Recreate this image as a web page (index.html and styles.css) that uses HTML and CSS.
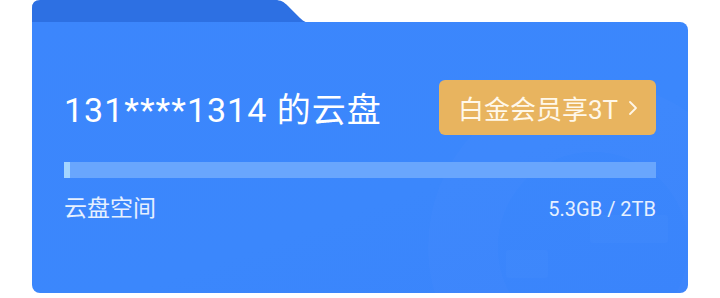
FILE: index.html
```html
<!DOCTYPE html>
<html lang="zh-CN">
<head>
<meta charset="utf-8">
<link rel="stylesheet" href="styles.css">
</head>
<body>
<div class="wrap">
  <div class="tab-row">
    <svg class="tab" width="280" height="23" viewBox="0 0 280 23">
      <path d="M0 23 V8 Q0 0 8 0 H243 C249 0 252 2 256 6 L268 18 C272 22 275 23 280 23 Z" fill="#2d70e3"/>
    </svg>
  </div>
  <div class="card">
    <div class="deco deco-ring"></div>
    <div class="deco deco-box1"></div>
    <div class="deco deco-box2"></div>
    <div class="top">
      <div class="title">131****1314 的云盘</div>
      <div class="btn">白金会员享3T<span class="chev">
        <svg width="12" height="20" viewBox="0 0 12 20"><path d="M3 4 L9 10 L3 16" fill="none" stroke="#fff6e6" stroke-width="1.8" stroke-linecap="round" stroke-linejoin="round"/></svg>
      </span></div>
    </div>
    <div class="bar"><div class="fill" style="width:6px"></div></div>
    <div class="meta">
      <span class="label">云盘空间</span>
      <span class="usage">5.3GB / 2TB</span>
    </div>
  </div>
</div>
</body>
</html>
```

FILE: styles.css
```css
* { box-sizing: border-box; }
html, body { margin: 0; padding: 0; background: #ffffff; }
body {
  font-family: Roboto, "Noto Sans CJK SC", sans-serif;
  width: 720px;
  height: 298px;
  overflow: hidden;
}
.wrap {
  margin-left: 32px;
  width: 656px;
}
.tab-row {
  display: flex;
  height: 22px;
}
.tab { display: block; }
.card {
  position: relative;
  overflow: hidden;
  height: 271px;
  background: linear-gradient(160deg, #3c86fc 0%, #3b87fc 60%, #3a84fb 100%);
  border-radius: 0 8px 8px 8px;
  padding: 58px 32px 0 32px;
  display: flex;
  flex-direction: column;
}
.deco { position: absolute; pointer-events: none; }
.deco-ring {
  width: 330px;
  height: 330px;
  border-radius: 50%;
  border: 70px solid rgba(255,255,255,0.015);
  right: -70px;
  top: 60px;
}
.deco-box1 {
  width: 78px; height: 28px;
  background: rgba(255,255,255,0.018);
  right: 20px; top: 193px;
  border-radius: 3px;
}
.deco-box2 {
  width: 42px; height: 28px;
  background: rgba(255,255,255,0.018);
  right: 140px; top: 228px;
  border-radius: 3px;
}
.top {
  position: relative;
  display: flex;
  align-items: center;
  justify-content: space-between;
  height: 55px;
}
.title {
  color: #ffffff;
  font-size: 34px;
  line-height: 1;
  letter-spacing: 1px;
  margin-top: 5px;
}
.btn {
  width: 217px;
  height: 55px;
  border-radius: 6px;
  background: #e8b45f;
  color: #fff8ea;
  font-size: 26px;
  display: flex;
  align-items: center;
  justify-content: center;
  gap: 9px;
  padding-left: 2px;
}
.chev { display: flex; align-items: center; }
.bar {
  position: relative;
  margin-top: 27px;
  height: 16px;
  background: #69a6fd;
}
.fill {
  height: 100%;
  background: #a3d5ff;
}
.meta {
  position: relative;
  display: flex;
  justify-content: space-between;
  align-items: center;
  margin-top: 16px;
}
.label {
  color: #e6f0ff;
  font-size: 23px;
  line-height: 30px;
}
.usage {
  color: #e6f0ff;
  font-size: 20px;
  line-height: 30px;
}
```
